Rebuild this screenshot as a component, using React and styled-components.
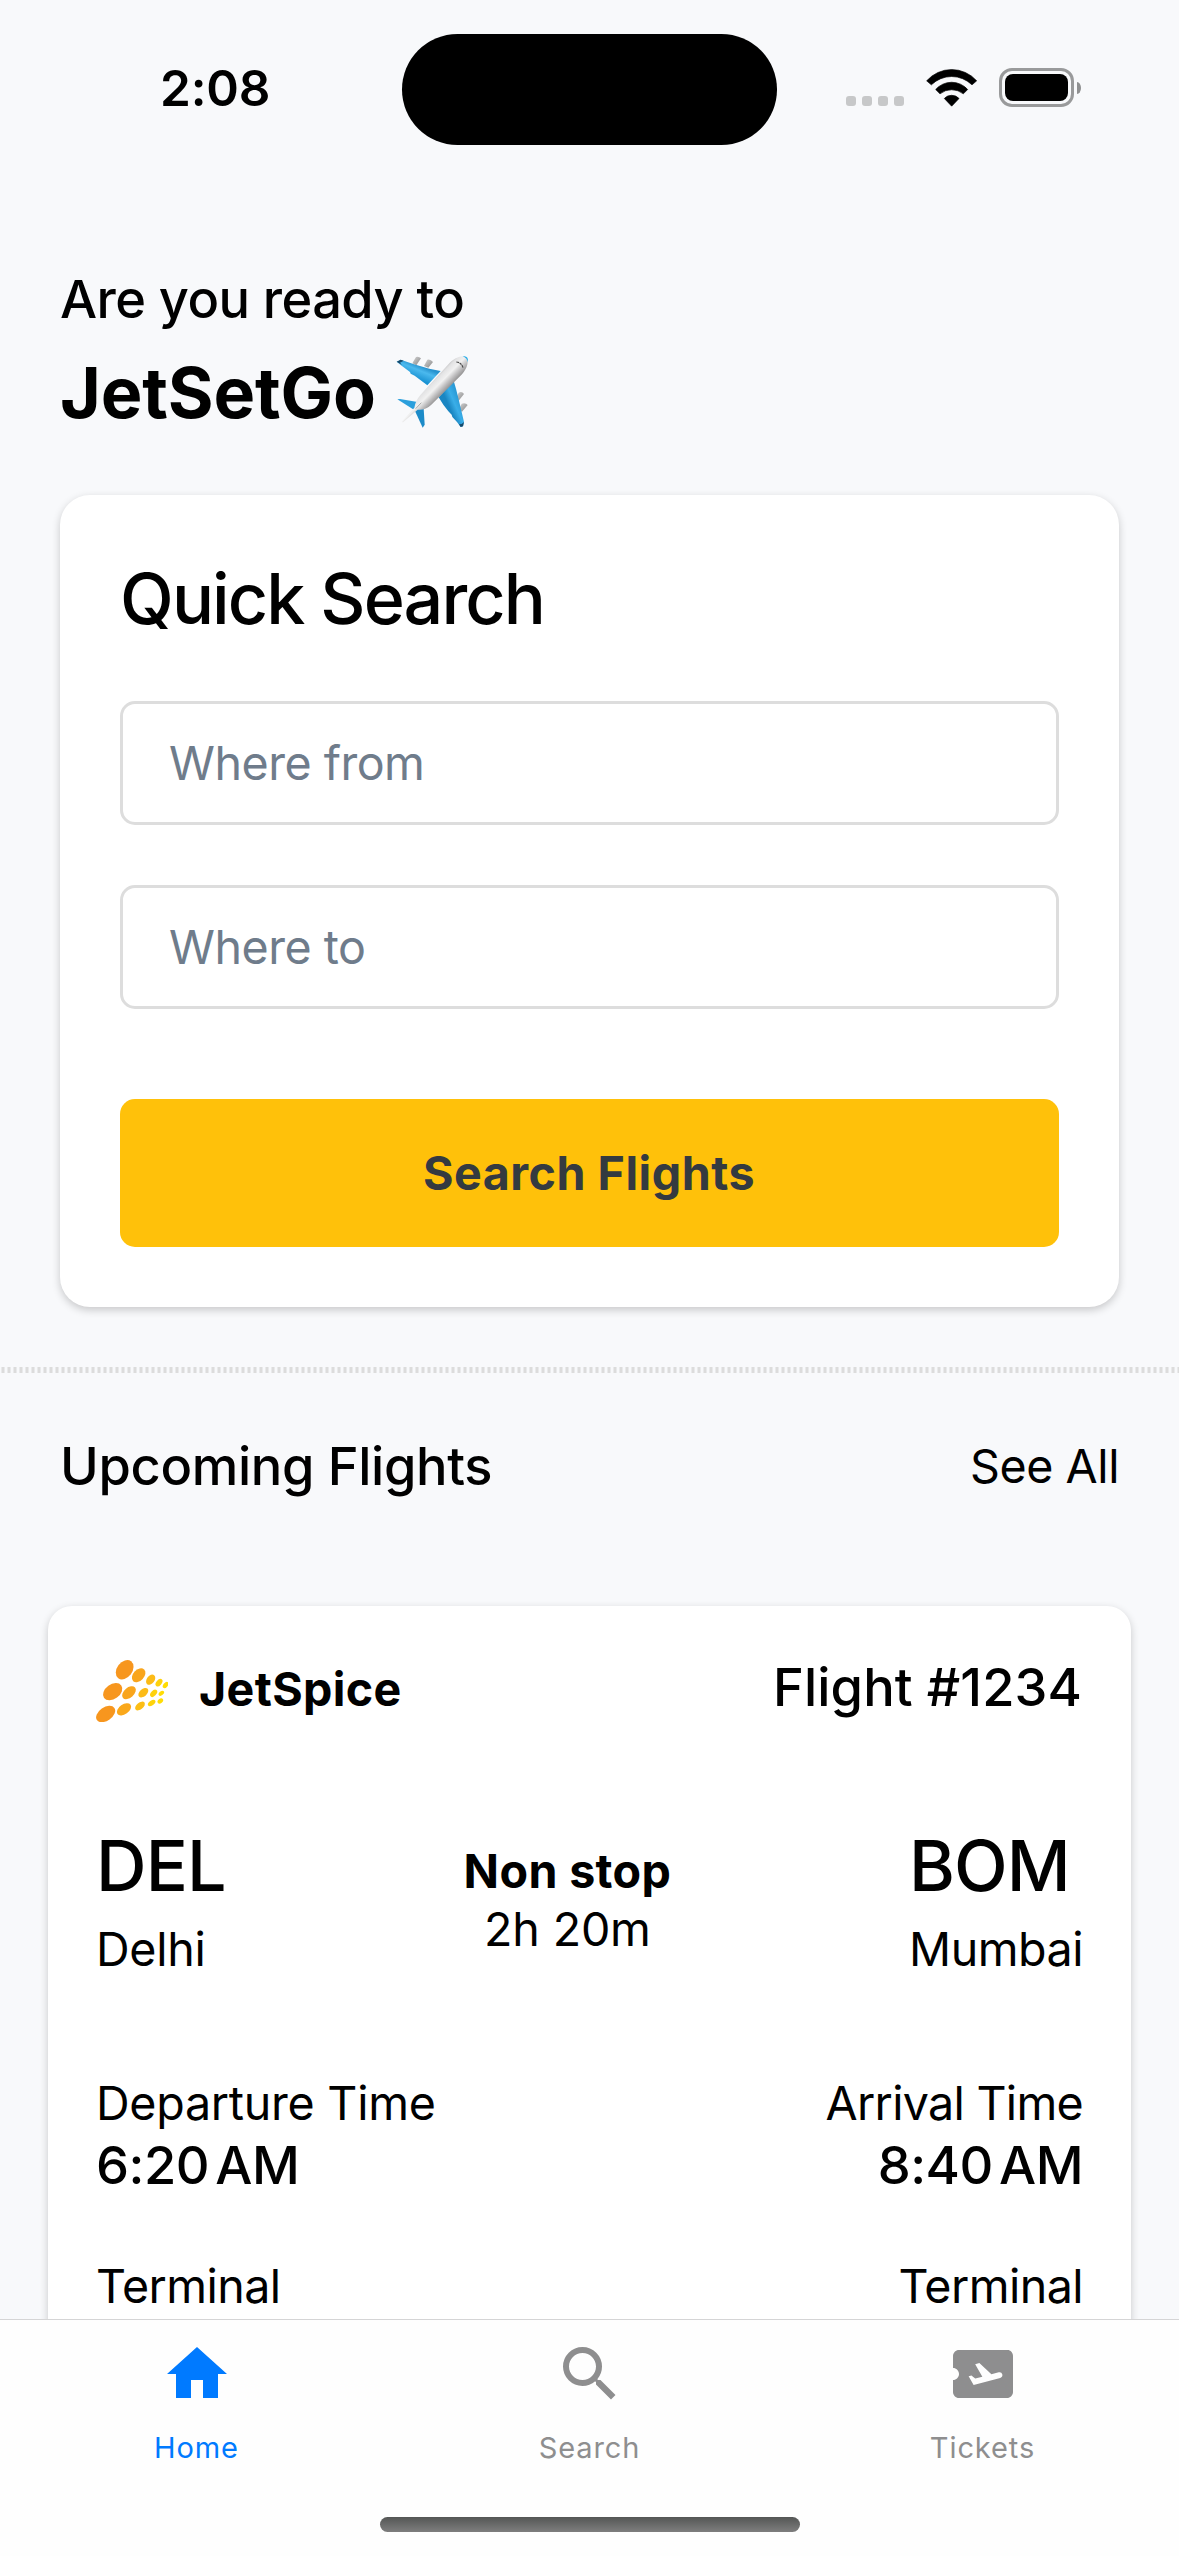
import React from 'react';
import styled, { createGlobalStyle } from 'styled-components';
import { MdHome, MdSearch, MdAirplaneTicket } from 'react-icons/md';

const GlobalStyle = createGlobalStyle`
  *, *::before, *::after { box-sizing: border-box; }
  body { margin: 0; background: #f8f9fb; }
`;

const Screen = styled.div`
  display: flex;
  flex-direction: column;
  width: 1179px;
  height: 2556px;
  overflow: hidden;
  background: #f8f9fb;
  color: #000;
  font-family: Inter, "Liberation Sans", sans-serif;
`;

const Content = styled.main`
  flex: 1;
  min-height: 0;
  overflow: hidden;
`;

/* type scale */
const Title = styled.h1`
  margin: 0;
  font-size: 70px;
  line-height: 85px;
  font-weight: ${(p) => p.$weight || 500};
  letter-spacing: ${(p) => p.$tracking || 0}px;
  white-space: nowrap;
`;

const Heading = styled.h2`
  margin: 0;
  font-size: 52.4px;
  line-height: 64px;
  font-weight: 500;
  letter-spacing: ${(p) => p.$tracking || 0}px;
  white-space: nowrap;
`;

const Body = styled.p`
  margin: 0;
  font-size: 46.6px;
  line-height: 56px;
  font-weight: ${(p) => (p.$bold ? 700 : 400)};
  letter-spacing: ${(p) => p.$tracking || 0}px;
  white-space: nowrap;
`;

/* status bar */
const StatusBar = styled.header`
  display: flex;
  align-items: flex-start;
  height: 177px;
  padding: 33.5px 98px 0 160px;
`;

const Clock = styled.time`
  width: 242px;
  margin-top: 24.5px;
  font-size: 49.5px;
  line-height: 60px;
  font-weight: 600;
  letter-spacing: -0.2px;
`;

const Island = styled.div`
  width: 375px;
  height: 111px;
  border-radius: 56px;
  background: #000;
`;

const Indicators = styled.div`
  display: flex;
  align-items: flex-end;
  gap: 22px;
  height: 39px;
  margin: 34.5px 0 0 69px;
`;

const Signal = styled.div`
  display: flex;
  gap: 6px;
  margin-bottom: 1px;
`;

const SignalDot = styled.i`
  width: 10px;
  height: 10px;
  border-radius: 3px;
  background: #c7c8c9;
`;

const WifiIcon = styled.svg`
  display: block;
  width: 51px;
  height: 38px;
`;

const Battery = styled.div`
  display: flex;
  align-items: center;
  gap: 3px;
`;

const BatteryShell = styled.div`
  width: 75px;
  height: 39px;
  padding: 3px;
  border: 3px solid #999a9b;
  border-radius: 13px;
`;

const BatteryLevel = styled.div`
  height: 100%;
  border-radius: 8px;
  background: #000;
`;

const BatteryCap = styled.div`
  width: 4px;
  height: 12px;
  border-radius: 0 4px 4px 0 / 0 6px 6px 0;
  background: #8f9091;
`;

/* greeting */
const Greeting = styled.section`
  display: flex;
  flex-direction: column;
  gap: 19px;
  padding: 90px 60px 60px;
`;

const Brand = styled.div`
  display: flex;
  align-items: center;
  gap: 20px;
`;

const PlaneArt = styled.svg`
  width: 72px;
  height: 72px;
  margin-bottom: 2px;
  overflow: visible;
`;

/* quick search */
const Card = styled.section`
  display: flex;
  flex-direction: column;
  background: #fff;
  box-shadow: 0 3px 9px rgba(0, 0, 0, 0.2);
`;

const SearchCard = styled(Card)`
  margin: 0 60px 60px;
  padding: 61px 60px 60px;
  border-radius: 30px;
`;

const Fields = styled.div`
  display: grid;
  gap: 60px;
  margin: 60px 0 90px;
`;

const Field = styled.input`
  width: 100%;
  height: 124px;
  padding: 0 46px;
  border: 3px solid #ddd;
  border-radius: 15px;
  background: #fff;
  font-family: inherit;
  font-size: 46.6px;
  letter-spacing: -0.5px;
  outline: none;

  &::placeholder {
    color: #6f7c8b;
    opacity: 1;
  }
`;

const SearchButton = styled.button`
  height: 148px;
  padding: 0 1px 0 0;
  border: 0;
  border-radius: 15px;
  background: #ffc10a;
  color: #343a40;
  font-family: inherit;
  font-size: 46.6px;
  line-height: 56px;
  font-weight: 700;
  letter-spacing: 0.51px;
`;

const Perforation = styled.hr`
  height: 6px;
  margin: 0;
  border: 0;
  background: repeating-linear-gradient(
    90deg,
    transparent 0 1px,
    #e9eaeb 1px 2px,
    #dcdcdc 2px 4px,
    #e9eaeb 4px 5px,
    transparent 5px 6px
  );
`;

/* upcoming flights */
const SectionHeader = styled.div`
  display: flex;
  align-items: center;
  justify-content: space-between;
  padding: 61px 60px 108px;
`;

const FlightCard = styled(Card)`
  margin: 0 48px;
  padding: 48px 48px 60px;
  border-radius: 24px;
`;

const Row = styled.div`
  display: flex;
  align-items: ${(p) => p.$align || 'flex-start'};
  justify-content: space-between;
  margin-top: ${(p) => p.$top || 0}px;
`;

const Airline = styled.div`
  display: flex;
  align-items: center;
  gap: 31px;
  height: 70px;
`;

const AirlineLogo = styled.svg`
  width: 72px;
  height: 66px;
`;

const FlightNumber = styled(Heading)`
  margin: 1px 1px 0 0;
`;

const Stack = styled.div`
  display: flex;
  flex-direction: column;
  align-items: ${(p) => p.$align || 'flex-start'};
  gap: ${(p) => p.$gap || 2}px;
`;

const Time = styled(Heading)`
  letter-spacing: -0.45px;
  word-spacing: -7.5px;
`;

/* tab bar */
const TabBar = styled.nav`
  display: flex;
  flex-direction: column;
  align-items: center;
  flex: none;
  height: 237px;
  padding-top: 18px;
  border-top: 1px solid #d5d5d6;
  background: #fefefe;
`;

const Tabs = styled.div`
  display: grid;
  grid-template-columns: repeat(3, 1fr);
  width: 100%;
`;

const Tab = styled.a`
  display: flex;
  flex-direction: column;
  align-items: center;
  gap: 20px;
  color: ${(p) => (p.$active ? '#007aff' : '#8e8e8f')};
  font-size: 29px;
  line-height: 35px;
  letter-spacing: 0.9px;

  svg {
    width: 72px;
    height: 72px;
  }
`;

const HomeIndicator = styled.div`
  width: 420px;
  height: 15px;
  margin-top: 52px;
  border-radius: 8px;
  background: linear-gradient(#545655, #7e7e7e);
`;

const Wifi = () => (
  <WifiIcon viewBox="438 146 153 113" strokeWidth="2" stroke="#000" strokeLinejoin="round">
    <path d="M440 181A100 100 0 0 1 590 181L576 193A87 87 0 0 0 454 193Z" />
    <path d="M467 207A64 64 0 0 1 563 207L550 220A56 56 0 0 0 480 220Z" />
    <path d="M493 234A30 30 0 0 1 537 234L515 257Z" />
  </WifiIcon>
);

const Plane = () => (
  <PlaneArt viewBox="48 48 216 216" role="img" aria-label="airplane">
    <defs>
      <linearGradient id="body" gradientUnits="userSpaceOnUse" x1="155" y1="110" x2="200" y2="154">
        <stop offset="0" stopColor="#a9a9aa" />
        <stop offset="0.25" stopColor="#e3e3e4" />
        <stop offset="0.5" stopColor="#f1f1f1" />
        <stop offset="0.75" stopColor="#bdbcbd" />
        <stop offset="1" stopColor="#8b8a8a" />
      </linearGradient>
      <linearGradient id="wingLeft" gradientUnits="userSpaceOnUse" x1="115" y1="75" x2="100" y2="112">
        <stop offset="0" stopColor="#2793cf" />
        <stop offset="0.35" stopColor="#4bb9ee" />
        <stop offset="1" stopColor="#1b93d3" />
      </linearGradient>
      <linearGradient id="wingRight" gradientUnits="userSpaceOnUse" x1="205" y1="195" x2="240" y2="180">
        <stop offset="0" stopColor="#1a86c2" />
        <stop offset="0.5" stopColor="#3aaee8" />
        <stop offset="1" stopColor="#2a9ad6" />
      </linearGradient>
      <linearGradient id="engine" x1="0" y1="0" x2="1" y2="1">
        <stop offset="0" stopColor="#d6d6d6" />
        <stop offset="1" stopColor="#858585" />
      </linearGradient>
    </defs>
    <g fill="url(#engine)">
      <path d="M97 70L108 51Q116 48 123 55L109 76Z" />
      <path d="M132 78L142 59Q151 56 159 66L145 83Z" />
      <path d="M228 174L236 158Q246 153 252 162L236 182Z" />
      <path d="M236 209L245 191Q257 187 263 195L246 215Z" />
    </g>
    <path fill="url(#wingLeft)" d="M50 65L62 59L102 73L148 86L182 93L142 136L104 107L92 101L90 96L74 84L62 75Z" />
    <path fill="#174a6b" d="M50 65L62 59L71 62L60 68L66 75Z" />
    <path fill="url(#wingRight)" d="M221 122L228 146L240 195L252 246L249 259L242 261L231 246L217 231L215 224L205 214L190 194L176 172Z" />
    <path fill="#174a6b" d="M252 246L249 259L242 261L237 253L245 252Z" />
    <path fill="#2b9fdc" d="M52 178L60 177L117 187L104 211Z" />
    <path fill="#1c8bc8" d="M104 211L130 190L134 254L128 263Z" />
    <path
      fill="url(#body)"
      d="M65 246L103 203Q106 182 122 164L206 72C222 54 246 44 259 51C268 62 262 85 246 103L154 194Q135 212 113 209L69 247Z"
    />
    <path fill="#28aeea" d="M248 49Q266 45 264 67Q261 54 248 49Z" />
    <path fill="none" stroke="#4a4a4a" strokeWidth="3.5" strokeDasharray="8 2" d="M229 66Q244 67 249 83" />
    <path fill="none" stroke="#858585" strokeWidth="2" d="M107 206L124 188" />
  </PlaneArt>
);

const seeds = [
  [134, 89, 32, 23, 53, '#f7961e'],
  [98, 155, 32, 22, 36, '#f7961e'],
  [77, 222, 32, 20, 35, '#f7961e'],
  [176, 106, 24, 16.5, 47, '#f9a51c'],
  [147, 158, 24, 15, 41, '#f9a51c'],
  [132, 208, 24, 14.5, 35, '#faa81b'],
  [212, 119, 17, 11.5, 52, '#fcbb17'],
  [190, 158, 17.5, 11, 42, '#fcbb17'],
  [180, 198, 17, 10, 39, '#fcbe15'],
  [237, 128, 13, 8, 50, '#fed10c'],
  [221, 160, 13, 8, 48, '#fed10c'],
  [215, 189, 13, 7, 36, '#fed30b'],
  [257, 135, 11, 6.5, 50, '#ffdc05'],
  [244, 160, 9.5, 6, 40, '#ffdc05'],
  [241, 183, 9.5, 6.5, 40, '#ffdc05'],
];

const SpiceLogo = () => (
  <AirlineLogo viewBox="48 48 216 198">
    {seeds.map(([x, y, rx, ry, angle, color]) => (
      <ellipse key={`${x}-${y}`} rx={rx} ry={ry} fill={color} transform={`translate(${x} ${y}) rotate(${-angle})`} />
    ))}
  </AirlineLogo>
);

export default function App() {
  return (
    <Screen>
      <GlobalStyle />
      <Content>
        <StatusBar>
          <Clock>2:08</Clock>
          <Island />
          <Indicators>
            <Signal>
              <SignalDot />
              <SignalDot />
              <SignalDot />
              <SignalDot />
            </Signal>
            <Wifi />
            <Battery>
              <BatteryShell>
                <BatteryLevel />
              </BatteryShell>
              <BatteryCap />
            </Battery>
          </Indicators>
        </StatusBar>

        <Greeting>
          <Heading as="p" $tracking={-0.58}>Are you ready to</Heading>
          <Brand>
            <Title $weight={700} $tracking={-0.14}>JetSetGo</Title>
            <Plane />
          </Brand>
        </Greeting>

        <SearchCard>
          <Title as="h2" $tracking={-1.9}>Quick Search</Title>
          <Fields>
            <Field placeholder="Where from" />
            <Field placeholder="Where to" />
          </Fields>
          <SearchButton type="button">Search Flights</SearchButton>
        </SearchCard>

        <Perforation />

        <SectionHeader>
          <Heading $tracking={-0.34}>Upcoming Flights</Heading>
          <Body $tracking={-0.45}>See All</Body>
        </SectionHeader>

        <FlightCard>
          <Row>
            <Airline>
              <SpiceLogo />
              <Body $bold $tracking={0.36}>JetSpice</Body>
            </Airline>
            <FlightNumber as="p" $tracking={0.1}>Flight #1234</FlightNumber>
          </Row>
          <Row $align="center" $top={99}>
            <Stack $gap={13}>
              <Title as="p" $tracking={-0.86}>DEL</Title>
              <Body $tracking={-0.31}>Delhi</Body>
            </Stack>
            <Stack $align="center">
              <Body $bold $tracking={0.37}>Non stop</Body>
              <Body $tracking={-0.18}>2h 20m</Body>
            </Stack>
            <Stack $gap={13}>
              <Title as="p" $tracking={-1.02}>BOM</Title>
              <Body $tracking={-0.5}>Mumbai</Body>
            </Stack>
          </Row>
          <Row $top={98}>
            <Stack>
              <Body $tracking={-0.27}>Departure Time</Body>
              <Time as="p">6:20 AM</Time>
            </Stack>
            <Stack $align="flex-end">
              <Body $tracking={-0.7}>Arrival Time</Body>
              <Time as="p">8:40 AM</Time>
            </Stack>
          </Row>
          <Row $top={61}>
            <Body $tracking={-0.55}>Terminal</Body>
            <Body $tracking={-0.55}>Terminal</Body>
          </Row>
        </FlightCard>
      </Content>

      <TabBar>
        <Tabs>
          <Tab $active>
            <MdHome />
            Home
          </Tab>
          <Tab>
            <MdSearch />
            Search
          </Tab>
          <Tab>
            <MdAirplaneTicket />
            Tickets
          </Tab>
        </Tabs>
        <HomeIndicator />
      </TabBar>
    </Screen>
  );
}
